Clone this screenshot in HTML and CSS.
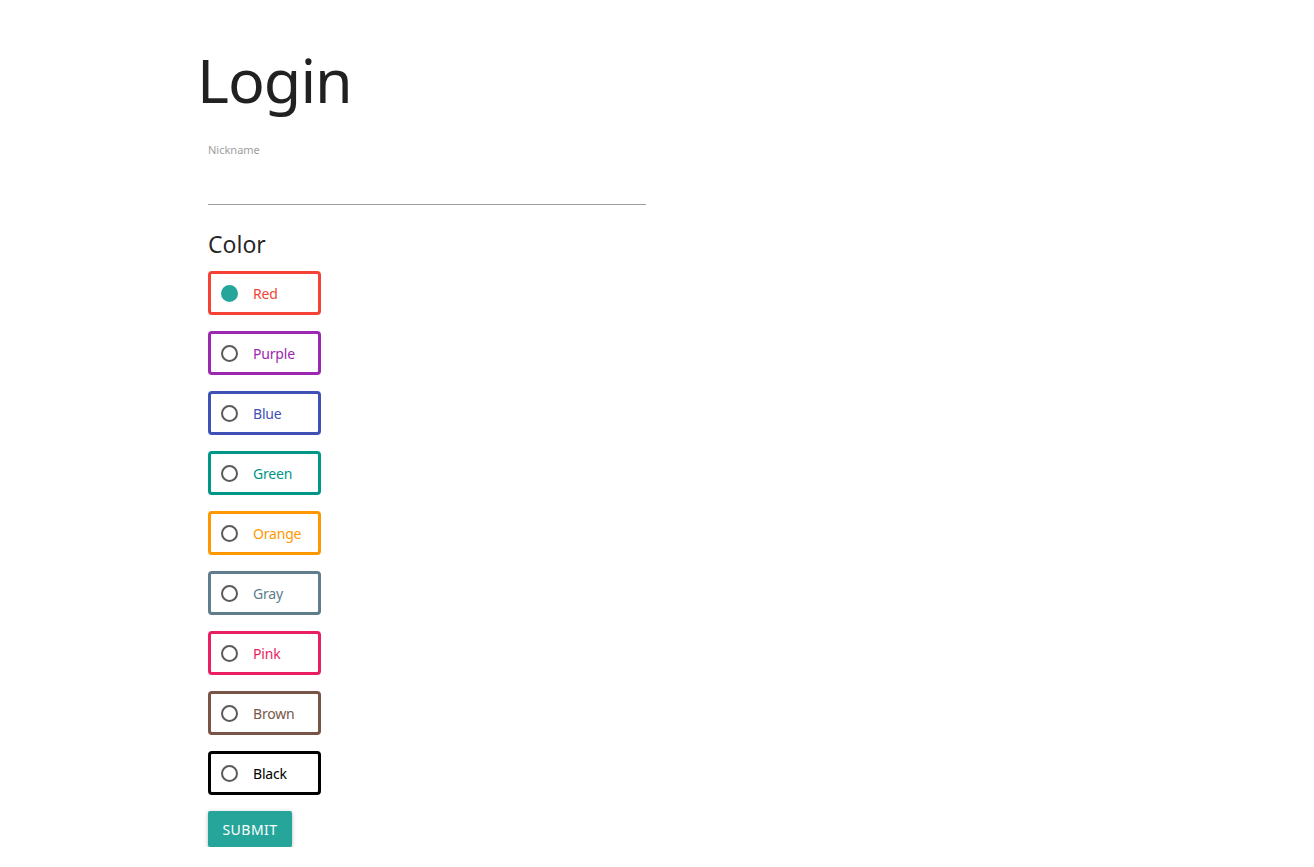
FILE: index.html
```html
<!DOCTYPE html>
<html lang="en">
<head>
<meta charset="utf-8">
<title>Login</title>
<link rel="stylesheet" href="styles.css">
</head>
<body>
<div class="container">
  <h1 class="title">Login</h1>
  <form class="form">
    <div class="field">
      <label class="field-label" for="nick">Nickname</label>
      <input class="field-input" id="nick" type="text">
    </div>
    <h5 class="section-title">Color</h5>
    <div class="options">
      <label class="option c-red"><span class="radio checked"></span><span class="option-text">Red</span></label>
      <label class="option c-purple"><span class="radio"></span><span class="option-text">Purple</span></label>
      <label class="option c-blue"><span class="radio"></span><span class="option-text">Blue</span></label>
      <label class="option c-green"><span class="radio"></span><span class="option-text">Green</span></label>
      <label class="option c-orange"><span class="radio"></span><span class="option-text">Orange</span></label>
      <label class="option c-gray"><span class="radio"></span><span class="option-text">Gray</span></label>
      <label class="option c-pink"><span class="radio"></span><span class="option-text">Pink</span></label>
      <label class="option c-brown"><span class="radio"></span><span class="option-text">Brown</span></label>
      <label class="option c-black"><span class="radio"></span><span class="option-text">Black</span></label>
    </div>
    <button class="btn" type="button">Submit</button>
  </form>
</div>
</body>
</html>
```
FILE: styles.css
```css
html, body {
  margin: 0;
  padding: 0;
  background: #fff;
}
body {
  font-family: "Noto Sans", "Open Sans", sans-serif;
  font-size: 15px;
  line-height: 1.5;
  color: rgba(0,0,0,0.87);
}
.container {
  width: 920px;
  margin: 0 auto;
}
.title {
  font-size: 61px;
  font-weight: 400;
  line-height: 66px;
  margin: 47px 0 0 0;
  letter-spacing: -1px;
}
.form {
  width: 438px;
  margin-left: 11px;
  display: flex;
  flex-direction: column;
  align-items: flex-start;
}
.field {
  width: 100%;
  margin-top: 30px;
  display: flex;
  flex-direction: column;
}
.field-label {
  font-size: 11px;
  line-height: 14px;
  color: #9e9e9e;
}
.field-input {
  border: none;
  border-bottom: 1px solid #9e9e9e;
  outline: none;
  height: 47px;
  padding: 0;
  margin: 0;
  font: inherit;
  background: transparent;
}
.section-title {
  font-size: 23px;
  font-weight: 400;
  line-height: 30px;
  margin: 24px 0 0 0;
}
.options {
  display: flex;
  flex-direction: column;
  gap: 16px;
  margin-top: 12px;
}
.option {
  box-sizing: border-box;
  width: 113px;
  height: 44px;
  border: 3px solid currentColor;
  border-radius: 4px;
  display: flex;
  align-items: center;
  padding-left: 10px;
}
.radio {
  box-sizing: border-box;
  width: 17px;
  height: 17px;
  border: 2px solid #5a5a5a;
  border-radius: 50%;
  flex: none;
}
.radio.checked {
  border-color: #26a69a;
  background: #26a69a;
}
.option-text {
  margin-left: 15px;
  font-size: 14px;
  letter-spacing: -0.2px;
}
.c-red { color: #f44336; }
.c-purple { color: #9c27b0; }
.c-blue { color: #3f51b5; }
.c-green { color: #009688; }
.c-orange { color: #ff9800; }
.c-gray { color: #607d8b; }
.c-pink { color: #e91e63; }
.c-brown { color: #795548; }
.c-black { color: #000; }
.btn {
  margin-top: 16px;
  height: 36px;
  width: 84px;
  padding: 0;
  border: none;
  border-radius: 2px;
  background: #26a69a;
  color: #fff;
  font-family: inherit;
  font-size: 14px;
  letter-spacing: 0.5px;
  text-transform: uppercase;
  box-shadow: 0 2px 2px 0 rgba(0,0,0,0.14), 0 3px 1px -2px rgba(0,0,0,0.12), 0 1px 5px 0 rgba(0,0,0,0.2);
}
```
